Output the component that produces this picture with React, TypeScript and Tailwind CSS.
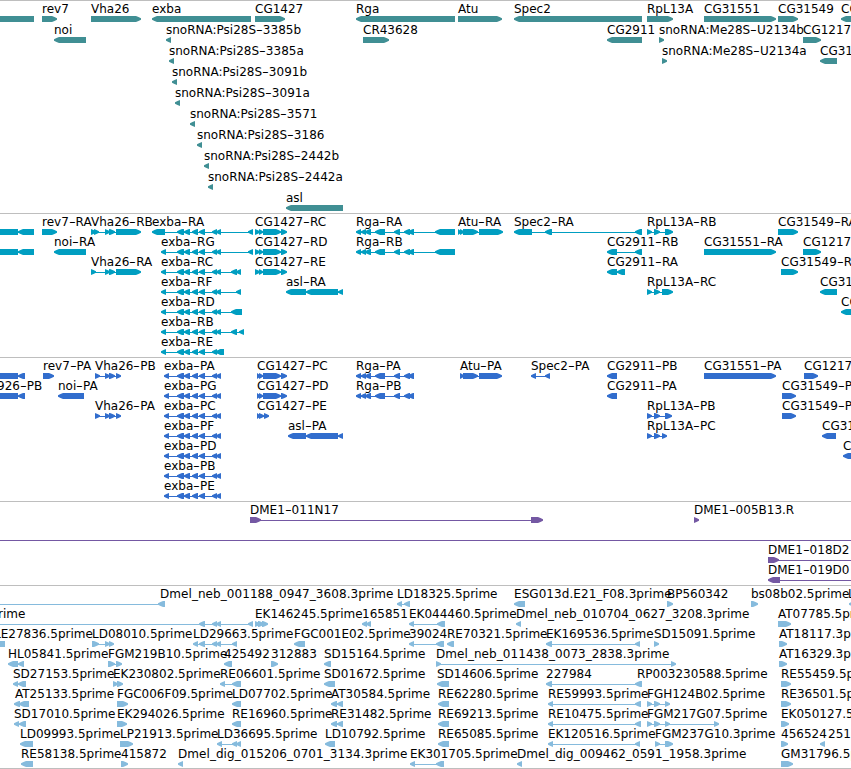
/**
 * Genome browser view
 * Stacked annotation tracks, each holding rows of stranded features
 */

import { Fragment, type FC } from "react";
import clsx from "clsx";

type Strand = "+" | "-";
type Span = [start: number, end: number];
/** label, strand, exons, and the label position when it differs from the first exon */
type Feature = [label: string, strand: Strand, exons: Span[], labelX?: number];

interface TrackData {
  id: string;
  color: string;
  rowClass: string;
  padClass: string;
  rows: Feature[][];
}

const VIEW_WIDTH = 851;
const TIP = 5;

const exbaCore: Span[] = [[177, 184], [184, 190], [192, 198], [199, 205], [212, 217], [216, 221]];
const exbaProtein: Span[] = [[164, 169], ...exbaCore];
const rgaCore: Span[] = [[356, 361], [361, 366], [365, 371], [375, 385], [394, 400], [404, 410], [408, 414]];
const cg1427: Span[] = [[255, 260], [259, 263], [263, 281], [281, 287]];

const genes: Feature[][] = [
  [
    ["", "-", [[-20, 34]]],
    ["rev7", "+", [[42, 57]]],
    ["Vha26", "+", [[91, 141]]],
    ["exba", "-", [[152, 251]]],
    ["CG1427", "+", [[255, 285]]],
    ["Rga", "-", [[356, 455]]],
    ["Atu", "+", [[458, 502]]],
    ["Spec2", "-", [[514, 642]]],
    ["RpL13A", "+", [[647, 673]]],
    ["CG31551", "+", [[704, 776]]],
    ["CG31549", "+", [[778, 798]]],
    ["CG", "-", [[841, 870]]],
  ],
  [
    ["noi", "-", [[54, 86]]],
    ["snoRNA:Psi28S-3385b", "-", [[166, 171]]],
    ["CR43628", "+", [[363, 389]]],
    ["CG2911", "-", [[607, 642]]],
    ["snoRNA:Me28S-U2134b", "+", [[659, 664]]],
    ["CG1217", "+", [[803, 821]]],
  ],
  [
    ["snoRNA:Psi28S-3385a", "-", [[169, 174]]],
    ["snoRNA:Me28S-U2134a", "+", [[662, 667]]],
    ["CG31", "-", [[820, 837]]],
  ],
  [["snoRNA:Psi28S-3091b", "-", [[172, 177]]]],
  [["snoRNA:Psi28S-3091a", "-", [[175, 180]]]],
  [["snoRNA:Psi28S-3571", "-", [[190, 195]]]],
  [["snoRNA:Psi28S-3186", "-", [[197, 202]]]],
  [["snoRNA:Psi28S-2442b", "-", [[204, 209]]]],
  [["snoRNA:Psi28S-2442a", "-", [[208, 213]]]],
  [["asl", "-", [[286, 343]]]],
];

const transcripts: Feature[][] = [
  [
    ["", "-", [[-20, 18], [18, 34]]],
    ["rev7-RA", "+", [[42, 57]]],
    ["Vha26-RB", "+", [[91, 96], [94, 99], [105, 110], [109, 115], [116, 141]]],
    ["exba-RA", "-", [[152, 165], ...exbaCore, [248, 253]]],
    ["CG1427-RC", "+", cg1427],
    ["Rga-RA", "-", [...rgaCore, [435, 455]]],
    ["Atu-RA", "+", [[458, 461], [460, 464], [463, 478], [479, 503]]],
    ["Spec2-RA", "-", [[514, 532], [545, 552], [635, 642]]],
    ["RpL13A-RB", "+", [[647, 652], [654, 660], [665, 673]]],
    ["CG31549-RA", "+", [[778, 798]]],
  ],
  [
    ["", "-", [[-20, 18], [18, 34]]],
    ["noi-RA", "-", [[54, 86]]],
    ["exba-RG", "-", [[161, 166], ...exbaCore, [248, 253]]],
    ["CG1427-RD", "+", cg1427],
    ["Rga-RB", "-", [...rgaCore, [435, 455]]],
    ["CG2911-RB", "-", [[607, 617], [635, 642]]],
    ["CG31551-RA", "+", [[704, 776]]],
    ["CG1217", "+", [[803, 821]]],
  ],
  [
    ["Vha26-RA", "+", [[91, 96], [105, 110], [109, 115], [116, 141]]],
    ["exba-RC", "-", [[161, 166], ...exbaCore, [231, 237], [236, 241]]],
    ["CG1427-RE", "+", cg1427],
    ["CG2911-RA", "-", [[607, 617], [617, 625]]],
    ["CG31549-RC", "+", [[781, 798]]],
  ],
  [
    ["exba-RF", "-", [[161, 166], ...exbaCore, [236, 241]]],
    ["asl-RA", "-", [[286, 306], [306, 338], [338, 343]]],
    ["RpL13A-RC", "+", [[647, 652], [654, 660], [662, 673]]],
    ["CG31", "-", [[820, 837]]],
  ],
  [
    ["exba-RD", "-", [[161, 166], ...exbaCore, [231, 242]]],
    ["CG", "-", [[841, 870]]],
  ],
  [["exba-RB", "-", [[161, 166], ...exbaCore, [231, 237], [239, 244]]]],
  [["exba-RE", "-", [[161, 166], ...exbaCore, [216, 224]]]],
];

const proteins: Feature[][] = [
  [
    ["", "-", [[-20, 18], [18, 25]]],
    ["rev7-PA", "+", [[43, 54]]],
    ["Vha26-PB", "+", [[95, 100], [105, 110], [109, 115], [116, 121]]],
    ["exba-PA", "-", exbaProtein],
    ["CG1427-PC", "+", [[257, 260], [259, 263], [263, 281], [281, 287]]],
    ["Rga-PA", "-", rgaCore],
    ["Atu-PA", "+", [[460, 464], [463, 478], [479, 502]]],
    ["Spec2-PA", "-", [[531, 536], [545, 550]]],
    ["CG2911-PB", "-", [[607, 617]]],
    ["CG31551-PA", "+", [[704, 776]]],
    ["CG1217", "+", [[804, 818]]],
  ],
  [
    ["926-PB", "-", [[-20, 18], [18, 25]], -3],
    ["noi-PA", "-", [[58, 84]]],
    ["exba-PG", "-", exbaProtein],
    ["CG1427-PD", "+", [[257, 260], [259, 263], [263, 281], [281, 287]]],
    ["Rga-PB", "-", rgaCore],
    ["CG2911-PA", "-", [[607, 617]]],
    ["CG31549-PA", "+", [[782, 796]]],
  ],
  [
    ["Vha26-PA", "+", [[95, 100], [105, 110], [109, 115], [116, 121]]],
    ["exba-PC", "-", exbaProtein],
    ["CG1427-PE", "+", [[257, 260], [259, 264], [264, 269]]],
    ["RpL13A-PB", "+", [[647, 652], [654, 660], [665, 672]]],
    ["CG31549-PC", "+", [[782, 796]]],
  ],
  [
    ["exba-PF", "-", exbaProtein],
    ["asl-PA", "-", [[288, 306], [306, 338], [338, 343]]],
    ["RpL13A-PC", "+", [[647, 652], [654, 660], [662, 667]]],
    ["CG31", "-", [[822, 836]]],
  ],
  [
    ["exba-PD", "-", exbaProtein],
    ["C", "-", [[843, 870]]],
  ],
  [["exba-PB", "-", exbaProtein]],
  [["exba-PE", "-", exbaProtein]],
];

const clones: Feature[][] = [
  [
    ["DME1-011N17", "+", [[250, 261], [531, 543]]],
    ["DME1-005B13.R", "+", [[694, 699]]],
  ],
  [["", "+", [[-20, -10], [870, 880]]]],
  [["DME1-018D2", "+", [[768, 779], [870, 880]]]],
  [["DME1-019D0", "-", [[768, 780], [870, 880]]]],
];

const ests: Feature[][] = [
  [
    ["Dmel_neb_001188_0947_3608.3prime", "-", [[-20, -10], [158, 165]], 160],
    ["LD18325.5prime", "-", [[397, 402], [404, 410]]],
    ["ESG013d.E21_F08.3prime", "-", [[514, 525]]],
    ["BP560342", "+", [[667, 673]]],
    ["bs08b02.5prime", "+", [[751, 758]]],
    ["L", "-", [[849, 870]], 848],
  ],
  [
    ["rime", "-", [[-20, -10], [199, 205], [212, 217], [216, 221], [248, 253]], -2],
    ["EK146245.5prime", "+", [[255, 260], [258, 264], [262, 268]]],
    ["165851", "-", [[362, 367], [366, 371]]],
    ["EK044460.5prime", "-", [[409, 414], [437, 445]]],
    ["Dmel_neb_010704_0627_3208.3prime", "-", [[516, 521]]],
    ["AT07785.5prime", "+", [[778, 791]]],
  ],
  [
    ["LE27836.5prime", "-", [[-20, 5]], -6],
    ["LD08010.5prime", "+", [[92, 99], [105, 110], [109, 114]]],
    ["LD29663.5prime", "-", [[193, 198], [199, 205], [212, 217], [216, 221], [232, 237]]],
    ["FGC001E02.5prime", "-", [[294, 305]]],
    ["39024", "-", [[409, 414], [436, 444]]],
    ["RE70321.5prime", "-", [[447, 454]]],
    ["EK169536.5prime", "-", [[546, 552], [635, 640]]],
    ["SD15091.5prime", "+", [[654, 659]]],
    ["AT18117.3prime", "+", [[779, 787]]],
  ],
  [
    ["HL05841.5prime", "-", [[8, 18], [18, 24]]],
    ["FGM219B10.5prime", "+", [[108, 115], [116, 122]]],
    ["425492", "-", [[224, 232]]],
    ["312883", "+", [[271, 278]]],
    ["SD15164.5prime", "-", [[324, 331]]],
    ["Dmel_neb_011438_0073_2838.3prime", "+", [[436, 441], [671, 676]]],
    ["AT16329.3prime", "+", [[779, 787]]],
  ],
  [
    ["SD27153.5prime", "-", [[13, 18], [18, 26]]],
    ["EK230802.5prime", "+", [[113, 118], [117, 123]]],
    ["RE06601.5prime", "-", [[220, 225], [232, 241]]],
    ["SD01672.5prime", "-", [[324, 335]]],
    ["SD14606.5prime", "-", [[437, 449]]],
    ["227984", "-", [[546, 552], [635, 642]]],
    ["RP003230588.5prime", "-", [], 637],
    ["RE55459.5prime", "+", [[781, 791]]],
  ],
  [
    ["AT25133.5prime", "-", [[14, 20], [19, 29]], 15],
    ["FGC006F09.5prime", "+", [[117, 128]]],
    ["LD07702.5prime", "-", [[232, 241]]],
    ["AT30584.5prime", "-", [[331, 337], [337, 343]]],
    ["RE62280.5prime", "-", [[438, 449]]],
    ["RE59993.5prime", "-", [[548, 553], [635, 641]]],
    ["FGH124B02.5prime", "+", [[647, 652], [654, 660], [665, 670]]],
    ["RE36501.5prime", "+", [[781, 791]]],
  ],
  [
    ["SD17010.5prime", "-", [[14, 19], [19, 26]]],
    ["EK294026.5prime", "+", [[117, 127]]],
    ["RE16960.5prime", "-", [[232, 241]]],
    ["RE31482.5prime", "-", [[331, 337], [337, 343]]],
    ["RE69213.5prime", "-", [[438, 449]]],
    ["RE10475.5prime", "-", [[548, 553], [635, 641]]],
    ["FGM217G07.5prime", "+", [[647, 652], [654, 660], [665, 670], [714, 719]]],
    ["EK050127.5prime", "+", [[781, 789]]],
  ],
  [
    ["LD09993.5prime", "-", [[20, 33]]],
    ["LP21913.5prime", "+", [[120, 133]]],
    ["LD36695.5prime", "-", [[217, 222], [232, 237], [236, 241]]],
    ["LD10792.5prime", "-", [[325, 335]]],
    ["RE65085.5prime", "-", [[438, 449]]],
    ["EK120516.5prime", "-", [[548, 553], [635, 640]]],
    ["FGM237G10.3prime", "+", [[655, 660], [665, 673]]],
    ["456524", "+", [[781, 788]]],
    ["251", "-", [[820, 825]], 828],
  ],
  [
    ["RE58138.5prime", "-", [[21, 33]]],
    ["415872", "+", [[121, 128]]],
    ["Dmel_dig_015206_0701_3134.3prime", "-", [[178, 183]]],
    ["EK301705.5prime", "-", [[410, 415], [436, 444]]],
    ["Dmel_dig_009462_0591_1958.3prime", "-", [[517, 522]]],
    ["GM31796.5prime", "+", [[781, 793]]],
  ],
];

const tracks: TrackData[] = [
  { id: "genes", color: "text-[#408f94]", rowClass: "h-[21px]", padClass: "pb-0.5", rows: genes },
  { id: "transcripts", color: "text-[#009ec1]", rowClass: "h-5", padClass: "pb-[3px]", rows: transcripts },
  { id: "proteins", color: "text-[#316dcd]", rowClass: "h-5", padClass: "pb-[3px]", rows: proteins },
  { id: "clones", color: "text-[#7458a3]", rowClass: "h-5", padClass: "pb-[3px]", rows: clones },
  { id: "ests", color: "text-[#86bbdd]", rowClass: "h-5", padClass: "pb-0.5", rows: ests },
];

/** Six pixel tall box with a blunt pointed end on the strand side */
const exonPoints = ([start, end]: Span, strand: Strand) => {
  const tip = Math.min(TIP, end - start);
  const [base, point, dir] = strand === "+" ? [start, end, -1] : [end, start, 1];
  const shoulder = point + dir * tip;
  const mid = point + dir * tip * 0.5;
  return `${base},0 ${shoulder},0 ${mid},0.9 ${point},2.2 ${point},3.8 ${mid},5.1 ${shoulder},6 ${base},6`;
};

/** Label text, with its hyphens drawn wide */
const Label: FC<{ text: string; x: number }> = ({ text, x }) => (
  <span
    className={clsx(
      "absolute top-px text-black whitespace-pre leading-[15px]",
      text.includes("_") && "tracking-[0.06px]"
    )}
    style={{ left: x }}
  >
    {text.split("-").map((part, i) => (
      <Fragment key={i}>
        {i > 0 && <span className="inline-block w-[6.8px] origin-left scale-x-[1.57]">-</span>}
        {part}
      </Fragment>
    ))}
  </span>
);

const Row: FC<{ features: Feature[]; className: string }> = ({ features, className }) => (
  <div className={clsx("relative flex flex-col", className)}>
    <div className="h-[15px] shrink-0">
      {features.map(([label, , exons, labelX]) =>
        label ? <Label key={label} text={label} x={labelX ?? exons[0][0]} /> : null
      )}
    </div>
    <svg width={VIEW_WIDTH} height={6} className="block shrink-0" fill="currentColor" aria-hidden="true">
      {features.map(([label, strand, exons], i) => (
        <g key={label || i}>
          {exons.length > 1 && (
            <rect x={exons[0][0] + 1} y={3} width={exons[exons.length - 1][1] - exons[0][0] - 2} height={1} />
          )}
          {exons.map((exon) => (
            <polygon key={exon[0]} points={exonPoints(exon, strand)} />
          ))}
        </g>
      ))}
    </svg>
  </div>
);

const Track: FC<{ track: TrackData }> = ({ track }) => (
  <section className={clsx("border-t border-[#bebebe]", track.color, track.padClass)}>
    {track.rows.map((features, i) => (
      <Row key={i} features={features} className={track.rowClass} />
    ))}
  </section>
);

export default function App() {
  return (
    <main className="h-[769px] w-[851px] overflow-hidden border-b border-[#bebebe] bg-white font-['DejaVu_Sans',sans-serif] text-[12px]">
      {tracks.map((track) => (
        <Track key={track.id} track={track} />
      ))}
    </main>
  );
}
